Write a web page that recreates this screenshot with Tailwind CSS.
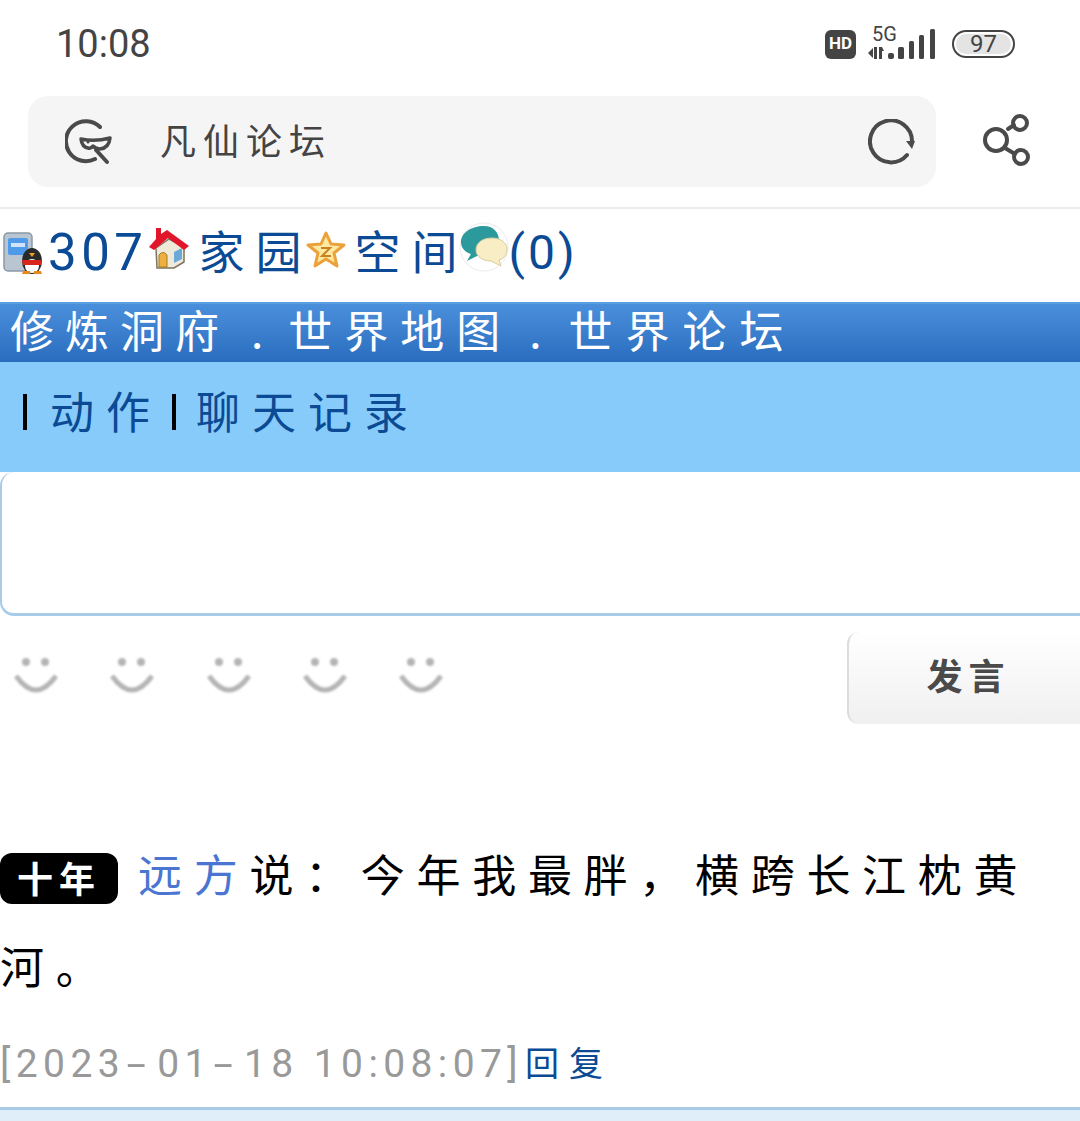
<!DOCTYPE html>
<html lang="zh-CN">
<head>
    <meta charset="UTF-8">
    <meta name="viewport" content="width=device-width, initial-scale=1.0">
    <title>凡仙论坛</title>
    <script src="https://cdn.jsdelivr.net/npm/@tailwindcss/browser@4"></script>
</head>
<body class="bg-white w-[1080px] h-[1121px] overflow-hidden font-['Noto_Sans_CJK_SC','Noto_Sans',sans-serif]">
    <!-- status bar -->
    <div class="h-[88px] pl-[56px] pr-[65px] flex items-center justify-between text-[#444]">
        <span class="text-[38px] font-['Roboto',sans-serif] leading-none">10:08</span>
        <div class="flex items-center">
            <div class="w-[31px] h-[29px] rounded-[6px] bg-[#444] text-white text-[17px] font-bold font-['Roboto',sans-serif] flex items-center justify-center">HD</div>
            <div class="ml-[12px] w-[68px] h-[44px]">
                <svg width="68" height="44" viewBox="0 0 68 44" fill="#444">
                    <text x="4" y="19" font-family="Roboto" font-size="20">5G</text>
                    <path d="M0 31l5-5v10zM6 25h3v12H6zM11 25h3l2 4h-2v8h-3z"/>
                    <rect x="20" y="31" width="6" height="6" rx="2"/>
                    <rect x="30" y="25" width="6" height="12" rx="1.5"/>
                    <rect x="41" y="19" width="5" height="18" rx="1.5"/>
                    <rect x="51" y="13" width="5" height="24" rx="1.5"/>
                    <rect x="62" y="7" width="5" height="30" rx="1.5"/>
                </svg>
            </div>
            <div class="ml-[16px] w-[63px] h-[28px] rounded-full border-2 border-[#444] p-[2px]">
                <div class="h-full rounded-full bg-[#e4e4e4] flex items-center justify-center text-[24px] leading-none font-['Roboto',sans-serif]">97</div>
            </div>
        </div>
    </div>

    <!-- address bar -->
    <div class="h-[121px] pl-[28px] pr-[49px] pt-[8px] border-b-2 border-[#ececec] flex items-start justify-between">
        <div class="w-[908px] h-[91px] bg-[#f5f5f5] rounded-[20px] pl-[37px] pr-[20px] flex items-center">
            <svg width="48" height="46" viewBox="0 0 48 46" fill="none" stroke="#4a4a4a" stroke-width="4" stroke-linecap="round">
                <path d="M35 8A20 20 0 1 0 30 40"/>
                <path d="M16 20Q30 23 45 19Q44 29 35 30Q31 30 28 27Q26 30 23 29Q17 28 16 20Z" stroke-width="3.5" stroke-linejoin="round"/>
                <circle cx="23" cy="23" r="1.5" fill="#4a4a4a" stroke="none"/>
                <path d="M31 31L42 43"/>
            </svg>
            <span class="ml-[47px] mb-[5px] text-[36px] leading-none tracking-[7px] text-[#444]">凡仙论坛</span>
            <svg class="ml-auto" width="48" height="46" viewBox="0 0 48 46" fill="none" stroke="#4a4a4a" stroke-width="4" stroke-linecap="round">
                <path d="M44 22A21 21 0 1 0 39 36"/>
                <path d="M38 22H47L44 30Z" fill="#4a4a4a" stroke="none"/>
            </svg>
        </div>
        <svg class="mt-[17px]" width="48" height="54" viewBox="0 0 48 54" fill="none" stroke="#4a4a4a" stroke-width="4" stroke-linecap="round">
            <circle cx="13" cy="27" r="11"/>
            <circle cx="37" cy="10" r="7"/>
            <circle cx="38" cy="44" r="7"/>
            <path d="M25 16L31 12M22 35L32 41"/>
        </svg>
    </div>

    <!-- user links -->
    <div class="h-[93px] flex items-center text-[#0b4a94] text-[46px] leading-none pb-[6px]">
        <svg class="ml-[3px] shrink-0" width="40" height="42" viewBox="0 0 40 42">
            <rect x="1" y="1" width="28" height="38" rx="4" fill="#b9c5d0" stroke="#8a98a6" stroke-width="1.5"/>
            <rect x="5" y="6" width="20" height="17" rx="2" fill="#4f9bea"/>
            <rect x="8" y="11" width="14" height="4" fill="#cfe4fb"/>
            <ellipse cx="29" cy="29" rx="10" ry="13" fill="#2a2a2a"/>
            <ellipse cx="29" cy="34" rx="7" ry="7" fill="#fff"/>
            <path d="M19 28H39L38 33H20Z" fill="#d8261c"/>
            <path d="M26 21H32L29 25Z" fill="#f0a020"/>
            <path d="M20 39H27V42H19ZM31 39H38L39 42H31Z" fill="#e88a1c"/>
        </svg>
        <span class="ml-[5px] text-[51px] tracking-[4.5px] font-['Roboto',sans-serif]">307</span>
        <svg class="shrink-0 -mt-[10px]" width="42" height="44" viewBox="0 0 42 44">
            <path d="M8 22L21 13 36 21V36L26 42H9Z" fill="#efe9da" stroke="#7d7460" stroke-width="1.5"/>
            <path d="M26 26L34 22V33L26 37Z" fill="#6aa9d8"/>
            <path d="M11 29Q15 24 19 29V41H11Z" fill="#eeb041" stroke="#a87a20"/>
            <path d="M1 21L8 13V2H13V8L19 4 41 20 36 24 20 12 6 24Z" fill="#e1162a"/>
        </svg>
        <span class="ml-[9px] mb-[8px] tracking-[11px]">家园</span>
        <svg class="shrink-0 -ml-[7px] -mt-[6px]" width="40" height="38" viewBox="0 0 40 38">
            <path d="M20 2L25 13 38 14 28 22 31 35 20 28 9 35 12 22 2 14 15 13Z" fill="#fde9a0" stroke="#eba23c" stroke-width="3" stroke-linejoin="round"/>
            <path d="M15 17H24L16 25H25" fill="none" stroke="#c9821f" stroke-width="2"/>
        </svg>
        <span class="ml-[9px] mb-[8px] tracking-[11px]">空间</span>
        <svg class="shrink-0 -mt-[12px] -ml-[10px]" width="50" height="50" viewBox="0 0 50 50">
            <circle cx="25" cy="25" r="24" fill="#fff" stroke="#ececec"/>
            <path d="M25 4C12 4 2 11 2 20 2 26 6 30 12 32L8 39 18 34C30 36 40 28 40 19 40 10 34 4 25 4Z" fill="#2c9a9c"/>
            <path d="M33 16C23 16 17 21 17 28 17 34 23 39 32 39L42 44 40 38C46 36 48 32 48 27 48 21 42 16 33 16Z" fill="#f8edc4" stroke="#d9cd9e"/>
        </svg>
        <span class="text-[48px] font-['Roboto',sans-serif] tracking-[3px]">(0)</span>
    </div>

    <!-- main nav -->
    <div class="h-[60px] pl-[10px] pb-[8px] flex items-center border-t-2 border-[#5b9ee0] bg-gradient-to-b from-[#4a8fdc] to-[#2a6dbf] text-white text-[44px] leading-none tracking-[11px] whitespace-pre">
        <span>修炼洞府</span><span class="ml-[21px] mr-[14px]">.</span><span class="tracking-[12px]">世界地图</span><span class="ml-[17px] mr-[16px]">.</span><span class="tracking-[13px]">世界论坛</span>
    </div>

    <!-- sub nav -->
    <div class="h-[110px] pl-[23px] pb-[14px] flex items-center bg-[#87cbfa] text-[#0b4a94] text-[44px] leading-none tracking-[12px]">
        <span class="w-[4px] h-[36px] bg-black mt-[4px]"></span>
        <span class="ml-[23px]">动作</span>
        <span class="w-[4px] h-[36px] bg-black ml-[10px] mt-[4px]"></span>
        <span class="ml-[20px]">聊天记录</span>
    </div>

    <!-- input box -->
    <div class="h-[144px] bg-white border-l-2 border-b-[3px] border-[#a8cbe8] rounded-bl-[14px] rounded-tl-[14px]"></div>

    <!-- smileys and send -->
    <div class="h-[92px] mt-[16px] flex justify-between">
        <div class="flex gap-[52.3px] pl-[14px] pt-[26px] items-start blur-[1px]">
            <svg width="44" height="36" viewBox="0 0 44 36" fill="none"><circle cx="12" cy="4" r="4" fill="#b4b4b4"/><circle cx="31" cy="4" r="4" fill="#b4b4b4"/><path d="M2 18Q22 46 42 18" stroke="#b4b4b4" stroke-width="5"/></svg>
            <svg width="44" height="36" viewBox="0 0 44 36" fill="none"><circle cx="12" cy="4" r="4" fill="#b4b4b4"/><circle cx="31" cy="4" r="4" fill="#b4b4b4"/><path d="M2 18Q22 46 42 18" stroke="#b4b4b4" stroke-width="5"/></svg>
            <svg width="44" height="36" viewBox="0 0 44 36" fill="none"><circle cx="12" cy="4" r="4" fill="#b4b4b4"/><circle cx="31" cy="4" r="4" fill="#b4b4b4"/><path d="M2 18Q22 46 42 18" stroke="#b4b4b4" stroke-width="5"/></svg>
            <svg width="44" height="36" viewBox="0 0 44 36" fill="none"><circle cx="12" cy="4" r="4" fill="#b4b4b4"/><circle cx="31" cy="4" r="4" fill="#b4b4b4"/><path d="M2 18Q22 46 42 18" stroke="#b4b4b4" stroke-width="5"/></svg>
            <svg width="44" height="36" viewBox="0 0 44 36" fill="none"><circle cx="12" cy="4" r="4" fill="#b4b4b4"/><circle cx="31" cy="4" r="4" fill="#b4b4b4"/><path d="M2 18Q22 46 42 18" stroke="#b4b4b4" stroke-width="5"/></svg>
        </div>
        <div class="w-[233px] h-[92px] rounded-l-[12px] border-l-2 border-[#dcdcdc] bg-gradient-to-b from-white to-[#f0f0f0] pl-[8px] pb-[8px] flex items-center justify-center text-[#4a4a4a] text-[36px] font-bold leading-none tracking-[6px]">发言</div>
    </div>

    <!-- message -->
    <div class="mt-[103px] text-black text-[44px] leading-[92px] tracking-[11.7px]">
        <span class="inline-block align-[-1px] w-[118px] h-[51px] bg-black text-white text-[36px] font-bold leading-[49px] tracking-[6px] text-center rounded-[12px]">十年</span><span class="ml-[20px] text-[#4a76d2]">远方</span><span>说：今年我最胖，横跨长江枕黄河。</span>
    </div>

    <!-- time and reply -->
    <div class="mt-[29px] h-[48px] flex items-center text-[#999] text-[39px] leading-none tracking-[5.4px] font-['Roboto',sans-serif]">
        <span>[2023<span class="inline-block scale-x-[1.8] mx-[8px]">-</span>01<span class="inline-block scale-x-[1.8] mx-[8px]">-</span>18 10:08:07]</span><span class="ml-[2px] mb-[4px] text-[#0b4a94] text-[34px] tracking-[10px] font-['Noto_Sans_CJK_SC',sans-serif]">回复</span>
    </div>

    <div class="mt-[19px] h-[30px] border-t-[3px] border-[#a8cbe8] bg-[#e0eefa]"></div>
</body>
</html>
